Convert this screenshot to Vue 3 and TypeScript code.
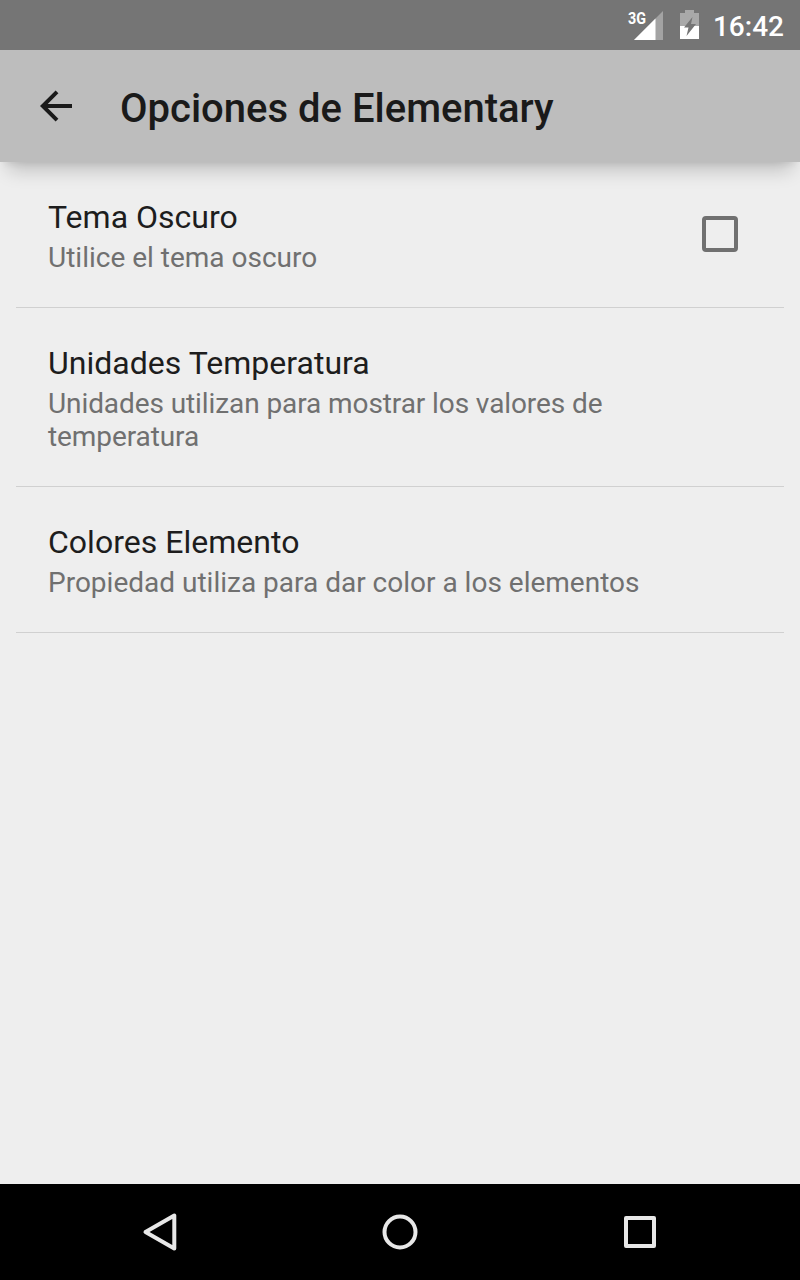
<script setup lang="ts">
interface Preference { title: string; summary: string; checkbox?: boolean; compact?: boolean }
const preferences: Preference[] = [
  { title: 'Tema Oscuro', summary: 'Utilice el tema oscuro', checkbox: true },
  { title: 'Unidades Temperatura', summary: 'Unidades utilizan para mostrar los valores de temperatura', compact: true },
  { title: 'Colores Elemento', summary: 'Propiedad utiliza para dar color a los elementos' },
]
</script>

<template>
  <div class="screen">
    <div class="status">
      <svg class="signal" width="38" height="32" viewBox="0 0 38 32">
        <path d="M37 2V31H8Z" fill="#a3a3a3" />
        <path d="M29.5 9.5V31H8Z" fill="#fff" />
        <text class="network" x="2" y="15" textLength="18" lengthAdjust="spacingAndGlyphs">3G</text>
      </svg>
      <svg class="battery" width="20" height="30" viewBox="0 0 20 30">
        <path d="M5 0H14V3H19V16H0V3H5Z" fill="#a9a9a9" />
        <path d="M0 16H19V29H0Z" fill="#fff" />
        <path d="M12.5 7L4 17.5H8.5L6.5 26L16 14H11Z" fill="#757575" />
      </svg>
      <span class="clock">16:42</span>
    </div>
    <header class="toolbar">
      <svg class="back" width="32" height="32" viewBox="0 0 32 32"><path d="M32 14H7.7L18.4 3.2L15.6 .4L0 16L15.6 31.6L18.4 28.8L7.7 18H32Z" fill="#1a1a1a" /></svg>
      <h1>Opciones de Elementary</h1>
    </header>
    <main>
      <section v-for="p in preferences" :key="p.title" class="preference">
        <div class="copy"><h2>{{ p.title }}</h2><p :class="{ compact: p.compact }">{{ p.summary }}</p></div>
        <div v-if="p.checkbox" class="checkbox" role="checkbox" aria-checked="false"></div>
      </section>
    </main>
    <nav>
      <div><svg width="40" height="40" viewBox="0 0 40 40"><path d="M34.3 3.5V36.5L5.5 20Z" /></svg></div>
      <div><svg width="40" height="40" viewBox="0 0 40 40"><circle cx="20" cy="20" r="15.5" /></svg></div>
      <div><svg width="40" height="40" viewBox="0 0 40 40"><rect x="6" y="6" width="28" height="28" /></svg></div>
    </nav>
  </div>
</template>

<style>
body { margin: 0; }
</style>
<style scoped>
.screen { width: 800px; height: 1280px; display: flex; flex-direction: column; background: #eee; font-family: Roboto, sans-serif; overflow: hidden; }
.status { position: relative; z-index: 1; height: 50px; flex: none; box-sizing: border-box; padding-right: 16px; background: #757575; display: flex; justify-content: flex-end; align-items: center; color: #fff; }
.signal { margin-right: 16px; }
.network { font: 700 17px Roboto, sans-serif; fill: #fff; }
.battery { margin-right: 13px; }
.clock { font-size: 28px; font-weight: 500; line-height: 50px; padding-top: 3px; }
.toolbar { height: 112px; flex: none; box-sizing: border-box; padding-left: 40px; background: #bdbdbd; display: flex; align-items: center; box-shadow: 0 7px 6px -5px rgba(0,0,0,.07), 0 16px 18px -8px rgba(0,0,0,.2); }
.back { margin-right: 48px; }
h1 { margin: 6px 0 0; font-size: 40px; line-height: 48px; font-weight: 500; color: #1a1a1a; }
main { flex: 1; padding: 0 16px; }
.preference { box-sizing: border-box; padding: 36px 32px 33px; border-bottom: 1px solid #d0d0d0; display: flex; justify-content: space-between; }
.copy { width: 600px; }
h2 { margin: 0; font-size: 32px; line-height: 38px; font-weight: 400; color: #1d1d1d; letter-spacing: .02px; }
p { margin: 5px 0 0; font-size: 28px; line-height: 33px; color: #707070; }
.compact { letter-spacing: -.09px; }
.checkbox { width: 36px; height: 36px; box-sizing: border-box; border: 4px solid #707070; border-radius: 4px; margin: 18px 14px 0 0; }
nav { height: 96px; flex: none; background: #000; display: flex; justify-content: center; }
nav div { width: 240px; display: flex; align-items: center; justify-content: center; }
nav svg { fill: none; stroke: #e8e8e8; stroke-width: 4; stroke-linejoin: round; }
</style>
